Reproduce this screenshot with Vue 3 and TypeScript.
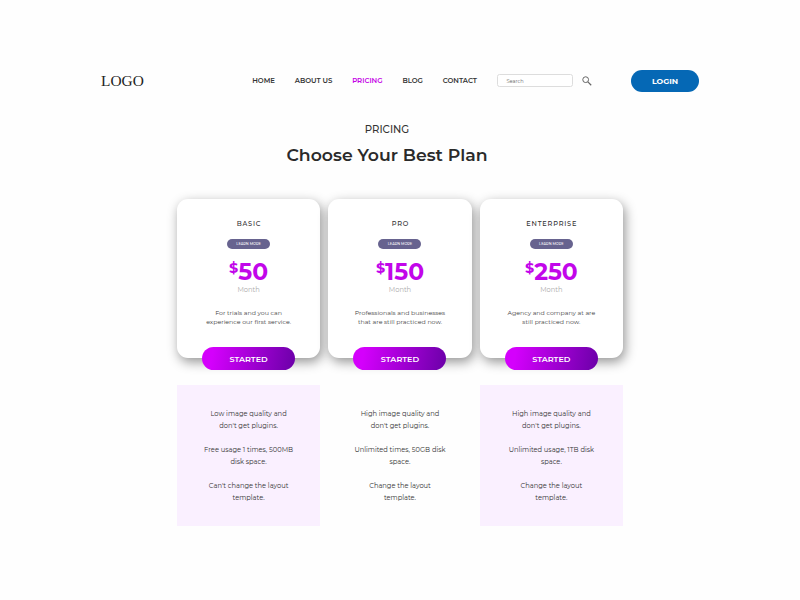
<script setup lang="ts">
import { ref } from 'vue'

interface Plan {
  name: string
  price: number
  summary: string[]
  features: string[][]
}

const links = ['HOME', 'ABOUT US', 'PRICING', 'BLOG', 'CONTACT']
const active = ref('PRICING')
const search = ref('')

const plans: Plan[] = [
  {
    name: 'BASIC',
    price: 50,
    summary: ['For trials and you can', 'experience our first service.'],
    features: [
      ['Low image quality and', "don't get plugins."],
      ['Free usage 1 times, 500MB', 'disk space.'],
      ["Can't change the layout", 'template.'],
    ],
  },
  {
    name: 'PRO',
    price: 150,
    summary: ['Professionals and businesses', 'that are still practiced now.'],
    features: [
      ['High image quality and', "don't get plugins."],
      ['Unlimited times, 50GB disk', 'space.'],
      ['Change the layout', 'template.'],
    ],
  },
  {
    name: 'ENTERPRISE',
    price: 250,
    summary: ['Agency and company at are', 'still practiced now.'],
    features: [
      ['High image quality and', "don't get plugins."],
      ['Unlimited usage, 1TB disk', 'space.'],
      ['Change the layout', 'template.'],
    ],
  },
]
</script>

<template>
  <div class="page">
    <header class="header">
      <div class="logo">LOGO</div>
      <nav class="nav">
        <a
          v-for="link in links"
          :key="link"
          :class="{ active: link === active }"
          @click="active = link"
        >{{ link }}</a>
      </nav>
      <form class="search" @submit.prevent>
        <input v-model="search" type="text" placeholder="Search" />
        <svg viewBox="0 0 18 18" fill="none" stroke="#666" stroke-width="1.8">
          <circle cx="6.6" cy="6.6" r="5.2" />
          <path d="M10.6 10.6L16.6 16.6" stroke-width="2.2" />
        </svg>
      </form>
      <button class="login" type="button">LOGIN</button>
    </header>

    <section class="intro">
      <p>PRICING</p>
      <h1>Choose Your Best Plan</h1>
    </section>

    <main class="plans">
      <article v-for="plan in plans" :key="plan.name" class="plan">
        <div class="card">
          <h2>{{ plan.name }}</h2>
          <span class="more">LEARN MORE</span>
          <div class="price"><sup>$</sup><span>{{ plan.price }}</span></div>
          <div class="period">Month</div>
          <p class="summary">
            <span v-for="line in plan.summary" :key="line">{{ line }}</span>
          </p>
          <button class="start" type="button">STARTED</button>
        </div>
        <ul class="features">
          <li v-for="(feature, i) in plan.features" :key="i">
            <span v-for="line in feature" :key="line">{{ line }}</span>
          </li>
        </ul>
      </article>
    </main>
  </div>
</template>

<style>
body {
  background: #fefefe;
}
</style>

<style scoped>
.page {
  width: 800px;
  height: 600px;
  box-sizing: border-box;
  padding-top: 69px;
  overflow: hidden;
  color: #333;
  font-family: Montserrat, Inter, sans-serif;
}
.header {
  display: flex;
  align-items: center;
  height: 23px;
  padding: 0 101px;
}
.logo {
  width: 151.2px;
  padding-top: 1px;
  color: #222;
  font: 15.4px/22px 'Liberation Serif', serif;
}
.nav {
  display: flex;
  gap: 19.8px;
  width: 244.8px;
  font-size: 6.95px;
  font-weight: 600;
  line-height: 9px;
  white-space: nowrap;
}
.nav a {
  cursor: pointer;
}
.nav .active {
  color: #c400e6;
}
.search {
  display: flex;
  align-items: center;
  gap: 9px;
}
.search input {
  width: 76px;
  height: 13px;
  box-sizing: border-box;
  padding: 0 8.5px;
  border: 1px solid #ddd;
  border-radius: 2.5px;
  background: #fff;
  font: 5px Montserrat, Inter, sans-serif;
  outline: none;
}
.search input::placeholder {
  color: #666;
}
.search svg {
  width: 10px;
  height: 10px;
}
.login {
  width: 68px;
  height: 22px;
  margin-left: auto;
  padding: 0;
  border: none;
  border-radius: 11px;
  background: #0568b5;
  color: #fff;
  font: 700 7.8px Montserrat, Inter, sans-serif;
}
.intro {
  width: 774px;
  text-align: center;
}
.intro p {
  margin: 30px 0 0;
  font-size: 10.2px;
  font-weight: 500;
  line-height: 16px;
}
.intro h1 {
  margin: 5px 0 0;
  color: #2a2a2a;
  font-size: 17.3px;
  font-weight: 600;
  line-height: 24px;
}
.plans {
  display: flex;
  gap: 8px;
  margin: 32px 0 0 176.9px;
}
.plan {
  width: 143.4px;
}
.card {
  display: flex;
  flex-direction: column;
  align-items: center;
  height: 159px;
  border-radius: 11px;
  background: #fff;
  box-shadow: 2px 4px 12px rgba(0, 0, 0, 0.42);
}
.card h2 {
  margin: 20px 0 0;
  padding-left: 0.8px;
  font-size: 6.6px;
  font-weight: 500;
  line-height: 10px;
  letter-spacing: 0.8px;
}
.more {
  width: 43px;
  height: 10px;
  margin-top: 10px;
  border-radius: 5px;
  background: #67638f;
  color: #fff;
  font-size: 3.5px;
  font-weight: 500;
  line-height: 10px;
  text-align: center;
}
.price {
  display: flex;
  margin-top: 9px;
  color: #c206ea;
  font-size: 23.4px;
  font-weight: 700;
  line-height: 28px;
}
.price sup {
  font-size: 14.4px;
  line-height: 20px;
}
.period {
  margin-top: -1px;
  color: #aaa;
  font-size: 6.7px;
  line-height: 10px;
}
.summary {
  display: flex;
  flex-direction: column;
  align-items: center;
  margin: 14px 0 0;
  color: #444;
  font-size: 6.25px;
  line-height: 9px;
  white-space: nowrap;
}
.start {
  flex: none;
  width: 93px;
  height: 23px;
  margin-top: 20px;
  padding: 0;
  border: none;
  border-radius: 12px;
  background: linear-gradient(100deg, #d400fc 12%, #6b00a8);
  color: #fff;
  font: 600 8.05px Montserrat, Inter, sans-serif;
}
.features {
  display: flex;
  flex-direction: column;
  gap: 12px;
  height: 141px;
  box-sizing: border-box;
  margin: 27px 0 0;
  padding: 23px 0 0;
  list-style: none;
  font-size: 6.7px;
  line-height: 12px;
  white-space: nowrap;
}
.plan:nth-child(odd) .features {
  background: #faf0ff;
}
.features li {
  display: flex;
  flex-direction: column;
  align-items: center;
}
</style>
